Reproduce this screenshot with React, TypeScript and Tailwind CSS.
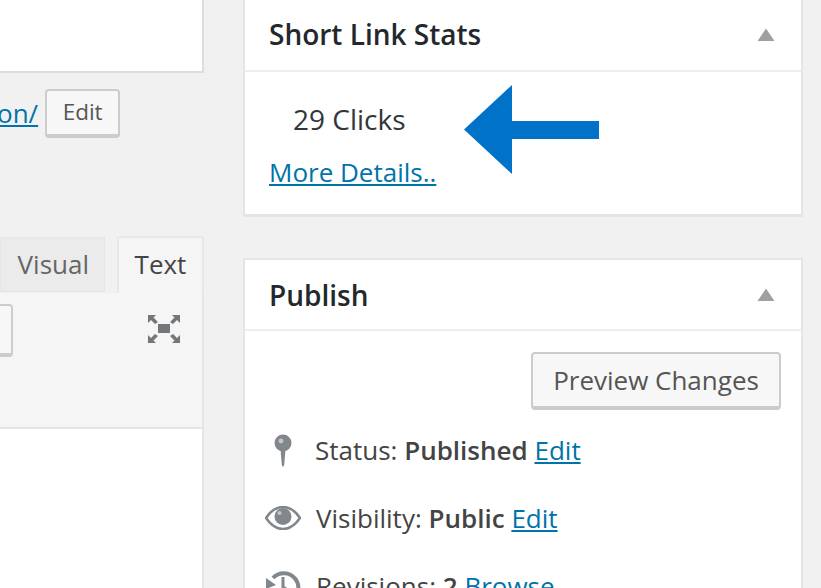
function Triangle() {
  return (
    <svg width="18" height="14" viewBox="0 0 18 14" className="block">
      <path d="M9 0.5 L17.5 13 H0.5 Z" fill="#a0a0a0" />
    </svg>
  );
}

function PinIcon() {
  return (
    <svg width="20" height="34" viewBox="0 0 20 34" className="block">
      <circle cx="10" cy="9" r="8.5" fill="#82878c" />
      <circle cx="8" cy="7" r="2.4" fill="#c4c7ca" />
      <path d="M7.5 15 H12.5 L11.2 31 L10 33 L8.8 31 Z" fill="#82878c" />
    </svg>
  );
}

function EyeIcon() {
  return (
    <svg width="36" height="24" viewBox="0 0 36 24" className="block">
      <path d="M1 12 C7 3 13 1 18 1 C23 1 29 3 35 12 C29 21 23 23 18 23 C13 23 7 21 1 12 Z" fill="none" stroke="#82878c" strokeWidth="2.6" />
      <circle cx="18" cy="10.5" r="8.5" fill="#82878c" />
      <circle cx="14.5" cy="7" r="2" fill="#c4c7ca" />
    </svg>
  );
}

function ClockIcon() {
  return (
    <svg width="36" height="36" viewBox="0 0 36 36" className="block">
      <path d="M8 10 A14.5 14.5 0 1 1 5 24" fill="none" stroke="#82878c" strokeWidth="4" />
      <path d="M1 10 L11 17 L1 21 Z" fill="#82878c" />
      <path d="M18 9 V19 L24 23" fill="none" stroke="#82878c" strokeWidth="3" />
    </svg>
  );
}

function FullscreenIcon() {
  return (
    <svg width="34" height="30" viewBox="0 0 34 30" className="block">
      <rect x="11" y="10" width="12" height="9" fill="#72777c" />
      <path d="M1 1 H9 L6.5 3.5 L11 8 L8 10 L4 6 L1 9 Z" fill="#72777c" />
      <path d="M33 1 H25 L27.5 3.5 L23 8 L26 10 L30 6 L33 9 Z" fill="#72777c" />
      <path d="M1 29 H9 L6.5 26.5 L11 22 L8 20 L4 24 L1 21 Z" fill="#72777c" />
      <path d="M33 29 H25 L27.5 26.5 L23 22 L26 20 L30 24 L33 21 Z" fill="#72777c" />
    </svg>
  );
}

function MetaRow({ icon, label, value, link, className }: { icon: React.ReactNode; label: string; value?: string; link: string; className: string }) {
  return (
    <div className={`flex items-center text-[26px] leading-[36px] text-[#444] ${className}`}>
      {icon}
      <span className="whitespace-pre">
        {label} {value && <b className="font-semibold">{value} </b>}
        <a className="text-[#0073aa] underline">{link}</a>
      </span>
    </div>
  );
}

export default function App() {
  return (
    <div className="flex h-[588px] w-[821px] overflow-hidden bg-[#f1f1f1] font-['Open_Sans',sans-serif]">
      {/* left column, editor side */}
      <div className="flex w-[204px] shrink-0 flex-col">
        <div className="h-[73px] shrink-0 border-r-2 border-b-2 border-[#ddd] bg-white" />
        <div className="mt-[15px] -ml-[3px] flex h-[50px] shrink-0 items-center">
          <a className="text-[26px] leading-none text-[#0073aa] underline">on/</a>
          <button className="ml-[7px] h-[49px] w-[75px] shrink-0 rounded-[4px] border-2 border-[#ccc] border-b-[4px] bg-[#f7f7f7] text-[22.5px] leading-none text-[#555]">
            Edit
          </button>
        </div>
        <div className="mt-[98px] flex h-[57px] shrink-0 justify-end">
          <div className="mt-[1px] flex h-[55px] w-[105px] items-center justify-end border border-[#e5e5e5] bg-[#ebebeb] pr-[15px] text-[26px] text-[#666]">
            Visual
          </div>
          <div className="z-10 ml-[12px] flex h-[57px] w-[87px] items-center justify-center rounded-t-[3px] border-x-2 border-t-2 border-[#e8e8e8] bg-[#f5f5f5] pb-[2px] text-[26px] text-[#444]">
            Text
          </div>
        </div>
        <div className="flex h-[134px] shrink-0 justify-between border-r-2 border-[#e5e5e5] bg-[#f5f5f5] pr-[21px]">
          <div className="mt-[11px] h-[53px] w-[13px] rounded-r-[4px] border-y-2 border-r-2 border-[#ccc] border-b-[4px] bg-[#f7f7f7]" />
          <div className="mt-[21px]">
            <FullscreenIcon />
          </div>
        </div>
        <div className="flex-1 border-t-2 border-r-2 border-[#e5e5e5] bg-white" />
      </div>

      {/* right column, meta boxes */}
      <div className="ml-[39px] flex w-[560px] shrink-0 flex-col">
        <section className="h-[217px] shrink-0 border-x-2 border-b-[3px] border-[#e5e5e5] bg-white">
          <div className="flex h-[72px] items-center justify-between border-b-2 border-[#eee] pr-[26px] pl-[24px]">
            <h2 className="pb-[3px] text-[28px] leading-none font-semibold text-[#23282d]">Short Link Stats</h2>
            <Triangle />
          </div>
          <div className="relative pl-[24px]">
            <p className="pt-[29px] pl-[24px] text-[28px] leading-[37px] text-[#32373c]">29 Clicks</p>
            <a className="mt-[16px] block text-[26px] leading-[37px] text-[#0073aa] underline">More Details..</a>
            <svg width="136" height="90" viewBox="0 0 136 90" className="absolute top-[13px] left-[219px]">
              <path d="M0 44.5 L48 0 V36 H135 V54 H48 V89 Z" fill="#0073c8" />
            </svg>
          </div>
        </section>

        <section className="mt-[41px] flex-1 border-x-2 border-t-2 border-[#e5e5e5] bg-white">
          <div className="flex h-[71px] items-center justify-between border-b-2 border-[#eee] pr-[26px] pl-[24px]">
            <h2 className="text-[28px] leading-none font-semibold text-[#23282d]">Publish</h2>
            <Triangle />
          </div>
          <div className="flex justify-end pt-[21px] pr-[20px]">
            <button className="h-[58px] w-[250px] rounded-[4px] border-2 border-[#ccc] border-b-[4px] bg-[#f7f7f7] text-[26px] leading-none text-[#555]">
              Preview Changes
            </button>
          </div>
          <MetaRow className="mt-[22px] pl-[28px]" icon={<span className="mt-[2px] mr-[22px]"><PinIcon /></span>} label="Status:" value="Published" link="Edit" />
          <MetaRow className="mt-[32px] pl-[20px]" icon={<span className="mr-[15px]"><EyeIcon /></span>} label="Visibility:" value="Public" link="Edit" />
          <MetaRow className="mt-[32px] pl-[20px]" icon={<span className="mr-[15px]"><ClockIcon /></span>} label="Revisions:" value="2" link="Browse" />
        </section>
      </div>
    </div>
  );
}
